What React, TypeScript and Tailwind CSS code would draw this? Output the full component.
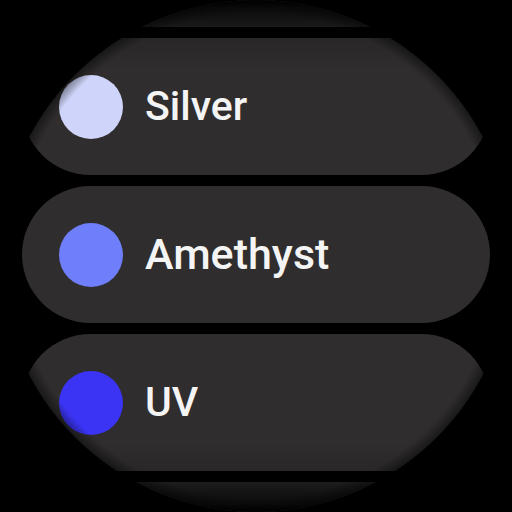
import React from 'react';

type Swatch = {
  name: string;
  color: string;
  big?: boolean;
};

const swatches: Swatch[] = [
  { name: '', color: '' },
  { name: 'Silver', color: 'bg-[#cfd5fa]' },
  { name: 'Amethyst', color: 'bg-[#6f7ffb]', big: true },
  { name: 'UV', color: 'bg-[#3b34f4]' },
  { name: '', color: '' },
];

function SwatchChip({ swatch }: { swatch: Swatch }) {
  return (
    <div className="mx-[22px] h-[137px] shrink-0 rounded-full bg-[#2f2d2d] flex items-center gap-[22px] px-[37px]">
      {swatch.name && (
        <>
          <div className={`w-[64px] h-[64px] rounded-full shrink-0 ${swatch.color}`} />
          <span
            className={`font-medium text-[#f4f4f4] leading-none ${swatch.big ? 'text-[43px]' : 'text-[41px]'}`}
          >
            {swatch.name}
          </span>
        </>
      )}
    </div>
  );
}

export default function App() {
  return (
    <div className="w-[512px] h-[512px] bg-black overflow-hidden font-['Roboto',sans-serif]">
      <div className="relative w-[512px] h-[512px] rounded-full overflow-hidden">
        {/* color list */}
        <div className="flex flex-col gap-[11px] -mt-[110px]">
          {swatches.map((s, i) => (
            <SwatchChip key={i} swatch={s} />
          ))}
        </div>

        {/* edge fades of the round screen */}
        <div className="pointer-events-none absolute inset-0 bg-[linear-gradient(to_bottom,#000_0px,rgba(0,0,0,0.75)_8px,rgba(0,0,0,0.45)_26px,rgba(0,0,0,0.15)_37px,rgba(0,0,0,0)_70px,rgba(0,0,0,0)_442px,rgba(0,0,0,0.15)_475px,rgba(0,0,0,0.45)_486px,rgba(0,0,0,0.75)_504px,#000_512px)]" />
        <div className="pointer-events-none absolute inset-0 bg-[radial-gradient(circle_closest-side,rgba(0,0,0,0)_95%,rgba(0,0,0,0.45)_100%)]" />
      </div>
    </div>
  );
}
